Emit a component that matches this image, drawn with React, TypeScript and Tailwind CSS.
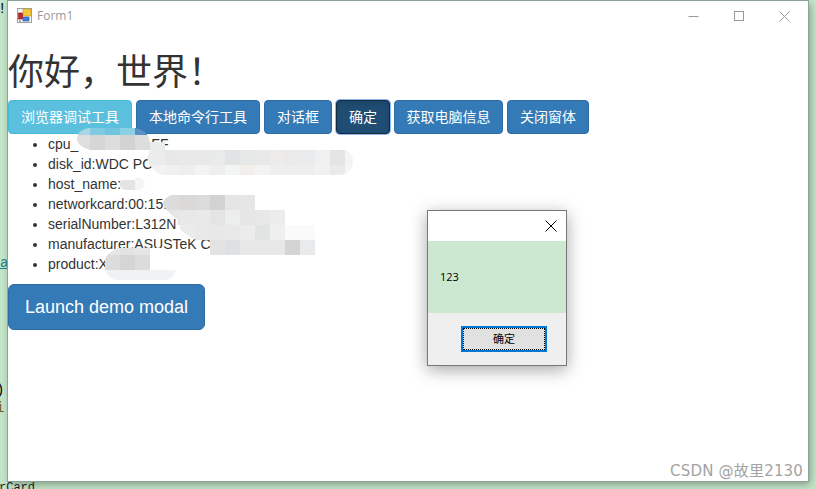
const SANS = "font-['Liberation_Sans','Noto_Sans_CJK_SC',sans-serif]";

const items = [
  <>cpu_<span className="inline-block w-[73px]" />FF</>,
  <>disk_id:WDC PC</>,
  <>host_name:</>,
  <>networkcard:00:15:</>,
  <>serialNumber:L312N</>,
  <>manufacturer:ASUSTeK C</>,
  <>product:X</>,
];

type Row = [number, number, number, string[]];
const rows: Row[] = [
  [75, 120, 15, ["#a9d6e4", "#7fc9e1", "#6fc4de", "#8cd0e6", "#5a90c4"]],
  [75, 135, 15, ["#dedede", "#d6d6d6", "#dddddd", "#d3d3d3", "#dcdddd", "#e9ecec"]],
  [135, 150, 15, ["#ebeded", "#ebeded", "#e8e8e8", "#e9e9e9", "#e9e9e9", "#e9ebea", "#e1e3e5", "#e7e9e8", "#e9e9e9", "#edecea", "#eaeaea", "#e9ebec", "#f1f0f0", "#e4e4e4", "#f3f5f5"]],
  [135, 165, 15, ["#f2f2f2", "#f2f2f2", "#f0f0f0", "#eeeeee", "#f3f3f3", "#eeeeee", "#f3f5f4", "#f1efec", "#f3f3f3", "#eeeeee", "#eeeeee", "#eeeeee", "#f1f1f1", "#eaeaea", "#f5f5f5"]],
  [120, 180, 15, ["#e4e4e4", "#f5f5f5"]],
  [150, 195, 15, ["#dcdcdc", "#dcdcdc", "#dbd8d8", "#dadcdc", "#d3d2d3", "#e5e5e5", "#e6e6e6"]],
  [150, 210, 15, ["#e5e6e6", "#e5e6e6", "#e8e8e8", "#e9e9e9", "#e4e4e4", "#eceeee", "#e6e6e6", "#e8e8e8", "#ececec"]],
  [165, 225, 15, ["#ffffff", "#ebebeb", "#e9e9e9", "#e8e8e8", "#e9e9e9", "#ececec", "#e2e3e3", "#efefef", "#fafafa", "#fafafa"]],
  [210, 240, 15, ["#e3e3e3", "#dfe0e2", "#e8e8e8", "#e8e8e8", "#e8e8e8", "#d6d4d3", "#e9eaec"]],
  [105, 240, 15, ["#e6e6e6", "#e2e2e2", "#e6e6e6", "#ffffff", "#ffffff"]],
  [105, 255, 15, ["#dcdcdc", "#d5d5d5", "#dcdcdc", "#ffffff", "#ffffff"]],
  [105, 270, 15, ["#f0f3f5", "#f0f3f5", "#f0f3f5", "#f0f3f5", "#f0f3f5"]],
];

function Mosaic() {
  return (
    <svg className="absolute left-0 top-0 pointer-events-none" width={816} height={489} viewBox="0 0 816 489">
      <defs>
        <clipPath id="shapes">
          <path d="M88 128H136Q148 130 150 142H165V150H90Q76 146 77 138Q78 130 88 128Z" />
          <path d="M150 150H345Q353 152 353 162Q353 172 342 175H162Q150 170 147 158Z" />
          <rect x="120" y="178" width="25" height="12" rx="6" />
          <path d="M172 195H255V210H285V225H315V255H262L212 256Q204 252 196 240Q180 232 177 225L178 220Q164 210 163 203Q165 197 172 195Z" />
          <path d="M118 248H165Q176 256 176 266Q176 278 165 280H116Q104 276 104 264Q104 254 118 248Z" />
        </clipPath>
      </defs>
      <g clipPath="url(#shapes)">
        {rows.map(([x, y, w, cells]) =>
          cells.map((fill, i) => (
            <rect key={`${y}-${x}-${i}`} x={x + i * w} y={y} width={w} height={15} fill={fill} />
          )),
        )}
      </g>
    </svg>
  );
}

function FormIcon() {
  return (
    <svg width="15" height="15" viewBox="0 0 15 15">
      <rect x="0.5" y="0.5" width="14" height="14" fill="#f4f4f4" stroke="#a0a0a0" />
      <rect x="6" y="1" width="8" height="7" fill="#f6c83c" stroke="#c89b20" strokeWidth="0.6" />
      <rect x="1.5" y="5" width="4" height="6" fill="#d42020" stroke="#8e1a1a" strokeWidth="0.6" />
      <rect x="6" y="9" width="6" height="4" fill="#3f7fd8" stroke="#2a5ca8" strokeWidth="0.6" />
      <rect x="2" y="12" width="2" height="2" fill="#b0b0b0" />
    </svg>
  );
}

function Btn({ children, className }: { children: React.ReactNode; className: string }) {
  return (
    <div className={`h-[34px] px-3 flex items-center rounded border text-sm text-white whitespace-nowrap ${className}`}>
      {children}
    </div>
  );
}

export default function App() {
  return (
    <div className={`relative w-[816px] h-[489px] overflow-hidden bg-[#c3e5c8] ${SANS}`}>
      <div className="absolute inset-0 font-['Liberation_Mono',monospace] text-sm leading-none">
        <span className="absolute left-[-2px] top-[2px] text-black">!</span>
        <span className="absolute left-0 top-[256px] text-[#23808c] underline">a</span>
        <span className="absolute left-[-4px] top-[383px] text-black">)</span>
        <span className="absolute left-[-4px] top-[401px] text-[#7a5a2a]">i:</span>
        <span className="absolute left-[-1px] top-[480px] text-xs text-[#1c1c1c]">rCard</span>
      </div>

      <div className="relative ml-2 mt-px w-[800px] h-[480px] bg-white text-[#333] shadow-[0_0_0_1px_#8aa595,2px_3px_8px_rgba(0,0,0,0.35)]">
        <div className="h-[30px] flex items-center">
          <div className="ml-[9px] mt-[-1px] flex items-center gap-[5px]">
            <FormIcon />
            <span className="font-['Open_Sans',sans-serif] text-xs text-[#999]">Form1</span>
          </div>
          <div className="ml-auto flex items-center text-[#999]">
            <svg width="11" height="11" viewBox="0 0 11 11" className="mr-[35px]" stroke="#999" fill="none">
              <path d="M0.5 5.5H10.5" />
            </svg>
            <svg width="11" height="11" viewBox="0 0 11 11" className="mr-[34px]" stroke="#999" fill="none">
              <rect x="0.5" y="0.5" width="9" height="9" />
            </svg>
            <svg width="11" height="11" viewBox="0 0 11 11" className="mr-[18px]" stroke="#999" fill="none">
              <path d="M0.5 0.5L10.5 10.5M10.5 0.5L0.5 10.5" />
            </svg>
          </div>
        </div>

        <h1 className="mt-[22px] mb-2 text-4xl leading-[39px] font-normal">你好，世界！</h1>

        <div className="flex gap-1">
          <Btn className="bg-[#5bc0de] border-[#46b8da]">浏览器调试工具</Btn>
          <Btn className="bg-[#337ab7] border-[#2e6da4]">本地命令行工具</Btn>
          <Btn className="bg-[#337ab7] border-[#2e6da4]">对话框</Btn>
          <Btn className="bg-[#204d74] border-[#122b40] shadow-[inset_0_3px_5px_rgba(0,0,0,0.125),0_0_0_1px_#8fb8ef]">确定</Btn>
          <Btn className="bg-[#337ab7] border-[#2e6da4] !px-[11.5px]">获取电脑信息</Btn>
          <Btn className="bg-[#337ab7] border-[#2e6da4]">关闭窗体</Btn>
        </div>

        <ul className="list-disc pl-10 mb-[10px] text-sm leading-5">
          {items.map((it, i) => (
            <li key={i}>{it}</li>
          ))}
        </ul>

        <div className="w-[197px] h-[46px] flex items-center justify-center rounded-md border border-[#2e6da4] bg-[#337ab7] text-white text-lg">
          Launch demo modal
        </div>
      </div>

      <Mosaic />

      <div className="absolute left-[427px] top-[210px] w-[140px] h-[156px] flex flex-col border border-[#777] bg-[#efefef] shadow-[0_4px_16px_rgba(0,0,0,0.35)]">
        <div className="h-[30px] bg-white flex justify-end items-center pr-[9px]">
          <svg width="12" height="12" viewBox="0 0 12 12" stroke="#000" fill="none">
            <path d="M0.5 0.5L11.5 11.5M11.5 0.5L0.5 11.5" />
          </svg>
        </div>
        <div className="h-[72px] bg-[#cde8d0] flex items-center pl-3 text-[11px] text-black font-['Open_Sans',sans-serif]">123</div>
        <div className="flex-1 flex items-start justify-end pt-[13px] pr-[19px]">
          <div className="w-[86px] h-[26px] border-2 border-[#0078d7] bg-[#e1e1e1] flex">
            <div className="flex-1 border border-dotted border-black flex items-center justify-center text-[11px] text-black">确定</div>
          </div>
        </div>
      </div>

      <div className="absolute left-[670px] top-[462px] text-[15px] leading-[18px] tracking-[0.2px] text-[#a3a3a3] font-['DejaVu_Sans','Noto_Sans_CJK_SC',sans-serif] whitespace-nowrap">
        CSDN @故里2130
      </div>
    </div>
  );
}
